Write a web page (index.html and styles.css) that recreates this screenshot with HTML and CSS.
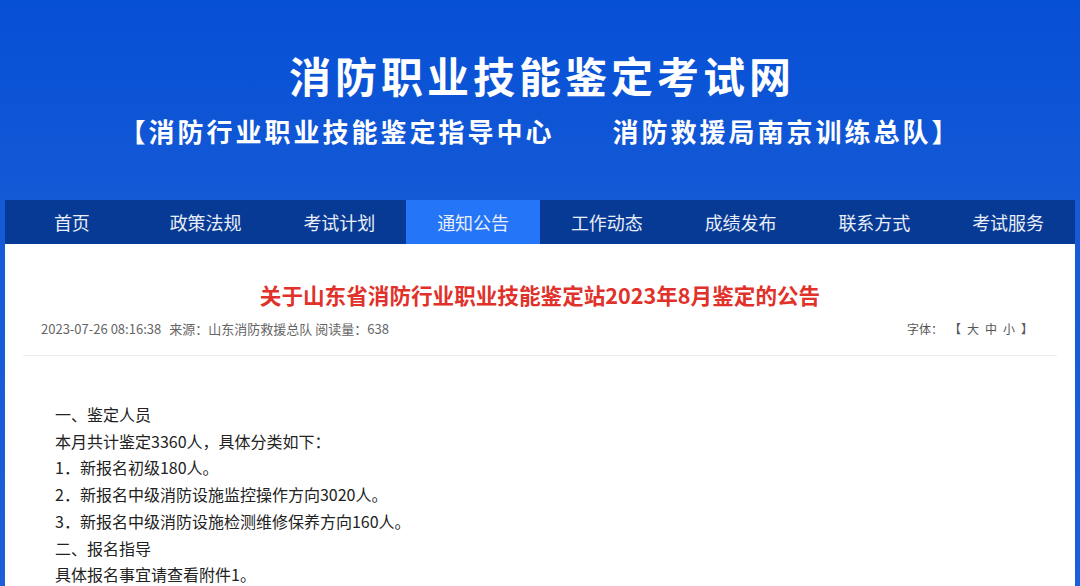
FILE: index.html
```html
<!DOCTYPE html>
<html lang="zh-CN">
<head>
<meta charset="utf-8">
<title>消防职业技能鉴定考试网</title>
<link rel="stylesheet" href="styles.css">
</head>
<body>
<div class="page">
  <header class="masthead">
    <h1 class="site-title">消防职业技能鉴定考试网</h1>
    <p class="site-sub"><span>【消防行业职业技能鉴定指导中心</span><span>消防救援局南京训练总队】</span></p>
  </header>
  <nav class="nav">
    <a class="nav-item">首页</a>
    <a class="nav-item">政策法规</a>
    <a class="nav-item">考试计划</a>
    <a class="nav-item active">通知公告</a>
    <a class="nav-item">工作动态</a>
    <a class="nav-item">成绩发布</a>
    <a class="nav-item">联系方式</a>
    <a class="nav-item">考试服务</a>
  </nav>
  <main class="panel">
    <div class="article">
      <h2 class="art-title">关于山东省消防行业职业技能鉴定站2023年8月鉴定的公告</h2>
      <div class="meta">
        <div class="meta-left"><span class="date">2023-07-26 08:16:38</span><span class="source">来源：山东消防救援总队</span><span>阅读量：638</span></div>
        <div class="meta-right"><span>字体：</span><span>【</span><span>大</span><span>中</span><span>小</span><span>】</span></div>
      </div>
      <div class="content">
        <p>一、鉴定人员</p>
        <p>本月共计鉴定3360人，具体分类如下：</p>
        <p>1．新报名初级180人。</p>
        <p>2．新报名中级消防设施监控操作方向3020人。</p>
        <p>3．新报名中级消防设施检测维修保养方向160人。</p>
        <p>二、报名指导</p>
        <p>具体报名事宜请查看附件1。</p>
      </div>
    </div>
  </main>
</div>
</body>
</html>
```

FILE: styles.css
```css
* { box-sizing: border-box; }
html, body { margin: 0; padding: 0; }
body {
  height: 586px;
  overflow: hidden;
  font-family: "Noto Sans CJK SC", "Noto Sans", sans-serif;
  background: linear-gradient(180deg, #0650d6 0px, #1459d6 200px, #1b60d8 586px);
}
.page {
  padding: 0 5px;
}
.masthead {
  height: 200px;
  padding-top: 50px;
  display: flex;
  flex-direction: column;
  align-items: center;
  color: #ffffff;
}
.site-title {
  margin: 0;
  font-size: 42px;
  line-height: 50px;
  font-weight: 700;
  letter-spacing: 4px;
  margin-right: -4px;
}
.site-sub {
  margin: 14px 0 0;
  font-size: 26px;
  line-height: 34px;
  font-weight: 700;
  letter-spacing: 3px;
  display: flex;
  gap: 58px;
}
.nav {
  height: 44px;
  display: grid;
  grid-template-columns: repeat(8, 1fr);
  background: #073a94;
}
.nav-item {
  display: flex;
  align-items: center;
  justify-content: center;
  color: #e9eef8;
  font-size: 18px;
  line-height: 44px;
}
.nav-item.active {
  background: #2575f8;
}
.panel {
  background: #ffffff;
  height: 342px;
  padding: 0 18px;
}
.article {
  padding-top: 36px;
}
.art-title {
  margin: 0;
  text-align: center;
  color: #e0312b;
  font-size: 21.6px;
  line-height: 30px;
  font-weight: 700;
}
.meta {
  margin-top: 9px;
  display: flex;
  justify-content: space-between;
  align-items: center;
  padding: 0 24px 16px 18px;
  border-bottom: 1px solid #ececec;
  font-size: 13px;
  line-height: 20px;
  color: #666666;
}
.meta-left {
  display: flex;
  gap: 3px;
}
.meta-left .date { margin-right: 5px; }
.meta-right {
  display: flex;
  gap: 6px;
  font-size: 12px;
  color: #555555;
  margin-left: 5px;
}
.content {
  padding: 45px 0 0 32px;
  font-size: 16px;
  line-height: 26.7px;
  color: #222222;
}
.content p {
  margin: 0;
}
```
